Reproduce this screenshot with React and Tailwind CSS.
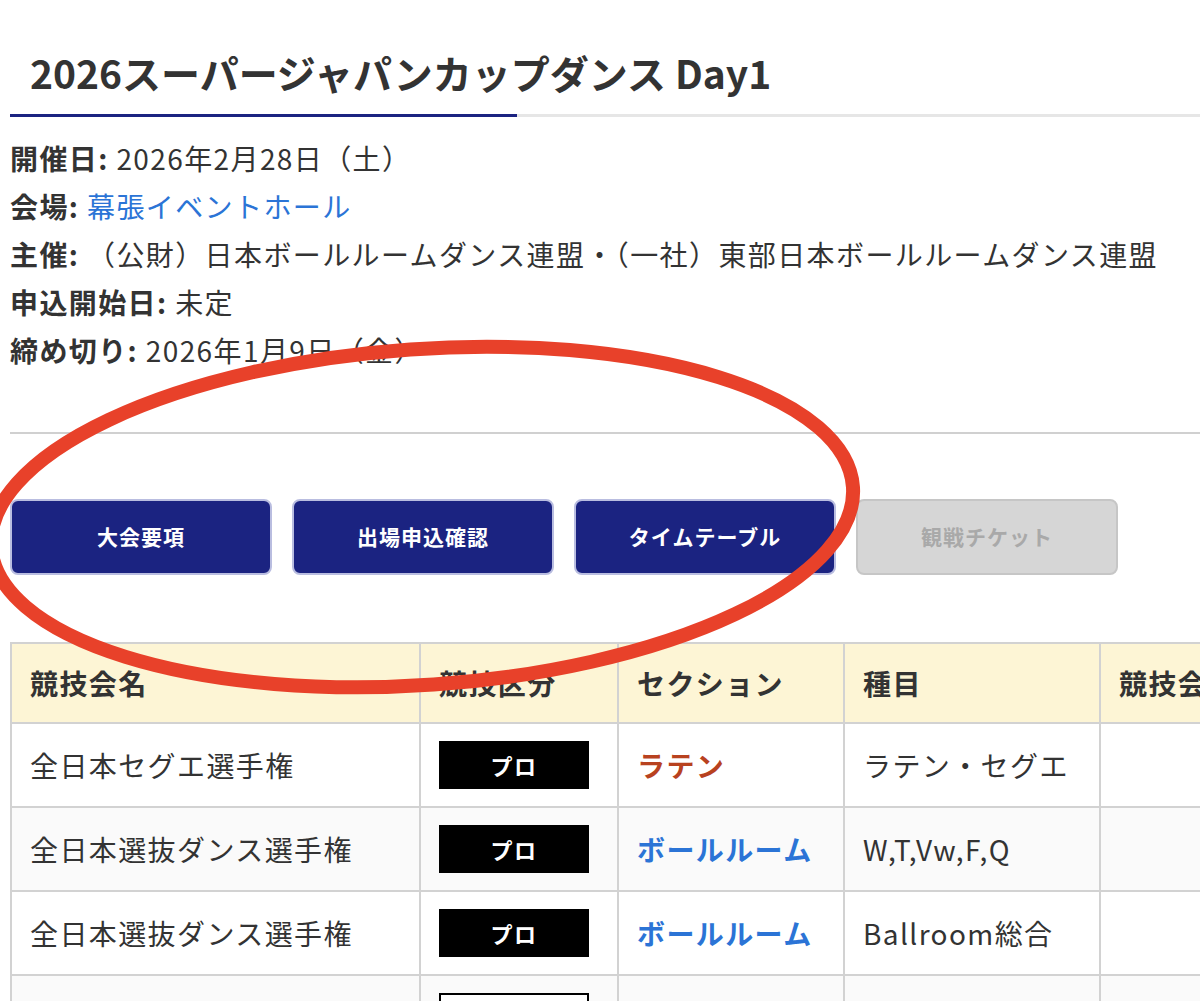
import React from "react"

const font = { fontFamily: '"Noto Sans CJK JP", "Noto Sans", sans-serif' }

const info = [
  { label: "開催日:", value: "2026年2月28日（土）" },
  { label: "会場:", value: "幕張イベントホール", link: true },
  { label: "主催:", value: " （公財）日本ボールルームダンス連盟・（一社）東部日本ボールルームダンス連盟" },
  { label: "申込開始日:", value: "未定" },
  { label: "締め切り:", value: "2026年1月9日（金）" },
]

const rows = [
  { name: "全日本セグエ選手権", section: "ラテン", latin: true, event: "ラテン・セグエ" },
  { name: "全日本選抜ダンス選手権", section: "ボールルーム", event: "W,T,Vw,F,Q" },
  { name: "全日本選抜ダンス選手権", section: "ボールルーム", event: "Ballroom総合" },
  { name: "", section: "", event: "", outline: true },
]

function NavButton({ children, disabled }) {
  return (
    <button
      className={
        disabled
          ? "h-[76px] w-[262px] shrink-0 rounded-lg border-2 border-[#c6c6c6] bg-[#d6d6d6] text-[21px] font-bold tracking-[1px] text-[#a9a9a9]"
          : "h-[76px] w-[262px] shrink-0 rounded-lg border-2 border-[#b9bde0] bg-[#1b2381] text-[21px] font-bold tracking-[1px] text-white"
      }
    >
      {children}
    </button>
  )
}

export default function App() {
  return (
    <div className="relative h-[1001px] w-[1200px] overflow-hidden bg-white text-[#333]" style={font}>
      <h1 className="pl-[30px] pt-[44px] pb-[14px] text-[39px] font-bold leading-[56px] text-[#333]">
        2026スーパージャパンカップダンス Day1
      </h1>
      <div className="ml-[10px] flex">
        <div className="h-[3px] w-[507px] bg-[#1b2381]" />
        <div className="h-[3px] flex-1 bg-[#e6e6e6]" />
      </div>

      <div className="px-[10px] pt-[17px]">
        {info.map((it) => (
          <div key={it.label} className="whitespace-nowrap text-[28px] leading-[48px] tracking-[1.4px]">
            <span className="font-bold">{it.label}</span>{" "}
            <span className={it.link ? "text-[#2b74d6]" : "text-[#333]"}>{it.value}</span>
          </div>
        ))}
      </div>

      <div className="ml-[10px] mt-[58px] h-[2px] bg-[#d0d0d0]" />

      <div className="flex gap-5 px-[10px] pt-[65px]">
        <NavButton>大会要項</NavButton>
        <NavButton>出場申込確認</NavButton>
        <NavButton>タイムテーブル</NavButton>
        <NavButton disabled>観戦チケット</NavButton>
      </div>

      <div className="pl-[10px] pt-[67px]">
        <table className="w-[1300px] border-collapse text-[28px] tracking-[1.4px]">
          <thead>
            <tr className="h-[80px] bg-[#fdf5d5]">
              <th className="w-[409px] border-2 border-[#d2d2d2] pl-[18px] text-left font-bold">競技会名</th>
              <th className="w-[198px] border-2 border-[#d2d2d2] pl-[18px] text-left font-bold">競技区分</th>
              <th className="w-[226px] border-2 border-[#d2d2d2] pl-[18px] text-left font-bold">セクション</th>
              <th className="w-[256px] border-2 border-[#d2d2d2] pl-[18px] text-left font-bold">種目</th>
              <th className="border-2 border-[#d2d2d2] pl-[18px] text-left font-bold">競技会場</th>
            </tr>
          </thead>
          <tbody>
            {rows.map((r, i) => (
              <tr key={i} className={i % 2 === 1 ? "h-[84px] bg-[#fafafa]" : "h-[84px] bg-white"}>
                <td className="border-2 border-[#d2d2d2] pl-[18px]">{r.name}</td>
                <td className="border-2 border-[#d2d2d2] pl-[18px] align-middle">
                  {r.outline ? (
                    <div className="h-[48px] w-[150px] border-2 border-black bg-white" />
                  ) : (
                    <div className="flex h-[48px] w-[150px] items-center justify-center bg-black text-[22px] font-bold text-white">
                      プロ
                    </div>
                  )}
                </td>
                <td
                  className={
                    r.latin
                      ? "border-2 border-[#d2d2d2] pl-[18px] font-bold text-[#b8421f]"
                      : "border-2 border-[#d2d2d2] pl-[18px] font-bold text-[#2b74d6]"
                  }
                >
                  {r.section}
                </td>
                <td className="border-2 border-[#d2d2d2] pl-[18px]">{r.event}</td>
                <td className="border-2 border-[#d2d2d2] pl-[18px]" />
              </tr>
            ))}
          </tbody>
        </table>
      </div>

      {/* red annotation circle drawn over the page */}
      <svg className="pointer-events-none absolute left-0 top-0" width="1200" height="1001">
        <ellipse
          cx="422"
          cy="517"
          rx="432"
          ry="168"
          transform="rotate(-4 422 517)"
          fill="none"
          stroke="#e8412a"
          strokeWidth="14"
        />
      </svg>
    </div>
  )
}
